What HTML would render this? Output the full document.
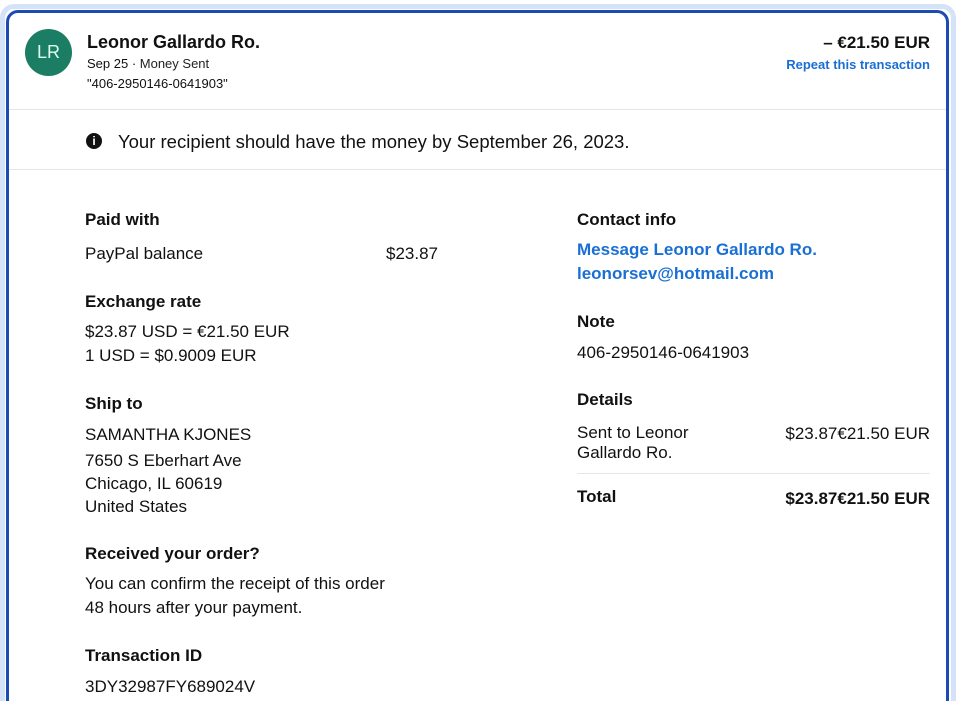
<!DOCTYPE html>
<html style="height:701px;overflow:hidden"><head><meta charset="utf-8"><style>
*{margin:0;padding:0;box-sizing:border-box}
body{width:961px;height:701px;overflow:hidden;background:#fff;font-family:"Liberation Sans",sans-serif;color:#111;position:relative}
.halo{position:absolute;left:0;top:4px;width:956px;height:720px;border:5px solid #d5e3f8;border-radius:14px}
.card{position:absolute;left:6px;top:10px;width:943px;height:720px;border:3px solid #1d4bb5;border-radius:12px;background:#fff}
.b{font-weight:bold}
.abs{position:absolute;white-space:nowrap}
.avatar{position:absolute;left:16px;top:16px;width:47px;height:47px;border-radius:50%;background:#1b7d63;color:#dfe;font-size:18px;text-align:center;line-height:47px}
.blue{color:#1a6fd4;font-weight:bold}
hr{position:absolute;border:none;height:1px;background:#e6e6e6}
.h{font-size:17px;font-weight:bold}
.t{font-size:17px}
</style></head><body>
<div class="halo"></div>
<div class="card">
<div class="avatar">LR</div>
<div class="abs b" style="left:78px;top:19px;font-size:18px">Leonor Gallardo Ro.</div>
<div class="abs" style="left:78px;top:43px;font-size:13px">Sep 25 · <span style="color:#222">Money Sent</span></div>
<div class="abs" style="left:78px;top:63px;font-size:13px">"406-2950146-0641903"</div>
<div class="abs b" style="right:16px;top:20px;font-size:17px">– €21.50 EUR</div>
<div class="abs blue" style="right:16px;top:44px;font-size:13px">Repeat this transaction</div>
<hr style="left:0;top:96px;width:937px">
<div class="abs" style="left:77px;top:120px;width:16px;height:16px;border-radius:50%;background:#111;color:#fff;font-size:12px;font-weight:bold;text-align:center;line-height:16px">i</div>
<div class="abs t" style="left:109px;top:118px;font-size:18.5px">Your recipient should have the money by September 26, 2023.</div>
<hr style="left:0;top:156px;width:937px">

<div class="abs h" style="left:76px;top:197px">Paid with</div>
<div class="abs t" style="left:76px;top:231px">PayPal balance</div>
<div class="abs t" style="left:377px;top:231px">$23.87</div>
<div class="abs h" style="left:76px;top:279px">Exchange rate</div>
<div class="abs t" style="left:76px;top:309px">$23.87 USD = €21.50 EUR</div>
<div class="abs t" style="left:76px;top:333px">1 USD = $0.9009 EUR</div>
<div class="abs h" style="left:76px;top:381px">Ship to</div>
<div class="abs t" style="left:76px;top:412px">SAMANTHA KJONES</div>
<div class="abs t" style="left:76px;top:438px">7650 S Eberhart Ave</div>
<div class="abs t" style="left:76px;top:461px">Chicago, IL 60619</div>
<div class="abs t" style="left:76px;top:484px">United States</div>
<div class="abs h" style="left:76px;top:531px">Received your order?</div>
<div class="abs t" style="left:76px;top:561px">You can confirm the receipt of this order</div>
<div class="abs t" style="left:76px;top:585px">48 hours after your payment.</div>
<div class="abs h" style="left:76px;top:633px">Transaction ID</div>
<div class="abs t" style="left:76px;top:664px">3DY32987FY689024V</div>

<div class="abs h" style="left:568px;top:197px">Contact info</div>
<div class="abs blue" style="left:568px;top:227px;font-size:17px">Message Leonor Gallardo Ro.</div>
<div class="abs blue" style="left:568px;top:251px;font-size:17px">leonorsev@hotmail.com</div>
<div class="abs h" style="left:568px;top:299px">Note</div>
<div class="abs t" style="left:568px;top:330px">406-2950146-0641903</div>
<div class="abs h" style="left:568px;top:377px">Details</div>
<div class="abs t" style="left:568px;top:410px;line-height:20px">Sent to Leonor<br>Gallardo Ro.</div>
<div class="abs t" style="right:16px;top:411px">$23.87€21.50 EUR</div>
<hr style="left:568px;top:460px;width:353px">
<div class="abs h" style="left:568px;top:474px">Total</div>
<div class="abs h" style="right:16px;top:476px">$23.87€21.50 EUR</div>
</div>
</body></html>
